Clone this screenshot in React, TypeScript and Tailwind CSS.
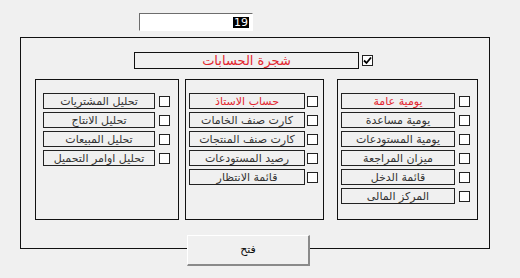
import React from "react";

type Item = { label: string; red?: boolean };

const rightItems: Item[] = [
  { label: "يومية عامة", red: true },
  { label: "يومية  مساعدة" },
  { label: "يومية المستودعات" },
  { label: "ميزان المراجعة" },
  { label: "قائمة الدخل" },
  { label: "المركز المالى" },
];

const middleItems: Item[] = [
  { label: "حساب الاستاذ", red: true },
  { label: "كارت صنف الخامات" },
  { label: "كارت صنف المنتجات" },
  { label: "رصيد المستودعات" },
  { label: "قائمة الانتظار" },
];

const leftItems: Item[] = [
  { label: "تحليل المشتريات" },
  { label: "تحليل الانتاج" },
  { label: "تحليل المبيعات" },
  { label: "تحليل اوامر التحميل" },
];

function Box({ checked = false }: { checked?: boolean }) {
  return (
    <div className="flex h-[11px] w-[11px] shrink-0 items-center justify-center border border-[#222] bg-white">
      {checked && (
        <svg width="9" height="9" viewBox="0 0 9 9">
          <path d="M1 4.5 L3.5 7 L8 1.5" fill="none" stroke="#000" strokeWidth="1.8" />
        </svg>
      )}
    </div>
  );
}

function Panel({ items, labelW, pl, gap }: { items: Item[]; labelW: string; pl: string; gap: string }) {
  return (
    <div className={`flex h-[141px] flex-col gap-[3px] border border-[#111] pt-[13px] ${pl}`}>
      {items.map((it) => (
        <div key={it.label} className={`flex items-center ${gap}`}>
          <div
            className={`flex h-[16px] ${labelW} items-center justify-center border border-[#222] text-[11px] leading-none ${
              it.red ? "text-[#e3262f]" : "text-[#333]"
            }`}
          >
            <span dir="rtl">{it.label}</span>
          </div>
          <Box />
        </div>
      ))}
    </div>
  );
}

export default function App() {
  return (
    <div
      className="h-[278px] w-[520px] overflow-hidden bg-[#f0f0f0] pt-[13px]"
      style={{ fontFamily: '"DejaVu Sans", Tahoma, sans-serif' }}
    >
      <div className="ml-[139px] flex h-[18px] w-[114px] items-center justify-end border-t border-l border-t-[#6d6d6d] border-l-[#6d6d6d] border-b border-r border-b-white border-r-white bg-white pr-[3px]">
        <span className="bg-black px-[1px] text-[11px] leading-[11px] text-white">19</span>
      </div>

      <div className="ml-[20px] mt-[6px] h-[212px] w-[470px] border border-[#111] pt-[14px]">
        <div className="ml-[113px] flex items-center gap-[3px]">
          <div className="flex h-[17px] w-[225px] items-center justify-center border border-[#111] text-[13px] leading-none text-[#e3262f]">
            <span dir="rtl">شجرة الحسابات</span>
          </div>
          <Box checked />
        </div>

        <div className="mt-[10px] flex">
          <div className="ml-[14px] w-[144px]">
            <Panel items={leftItems} labelW="w-[112px]" pl="pl-[7px]" gap="gap-[4px]" />
          </div>
          <div className="ml-[6px] w-[139px]">
            <Panel items={middleItems} labelW="w-[116px]" pl="pl-[3px]" gap="gap-[2px]" />
          </div>
          <div className="ml-[13px] w-[141px]">
            <Panel items={rightItems} labelW="w-[114px]" pl="pl-[3px]" gap="gap-[4px]" />
          </div>
        </div>
      </div>

      <div className="relative -mt-[14px] ml-[187px] flex h-[31px] w-[123px] items-center justify-center border-t border-l border-t-white border-l-white border-b-2 border-r-2 border-b-[#8a8a8a] border-r-[#8a8a8a] bg-[#f0f0f0] text-[11px] text-[#111]">
        <span dir="rtl">فتح</span>
      </div>
    </div>
  );
}
